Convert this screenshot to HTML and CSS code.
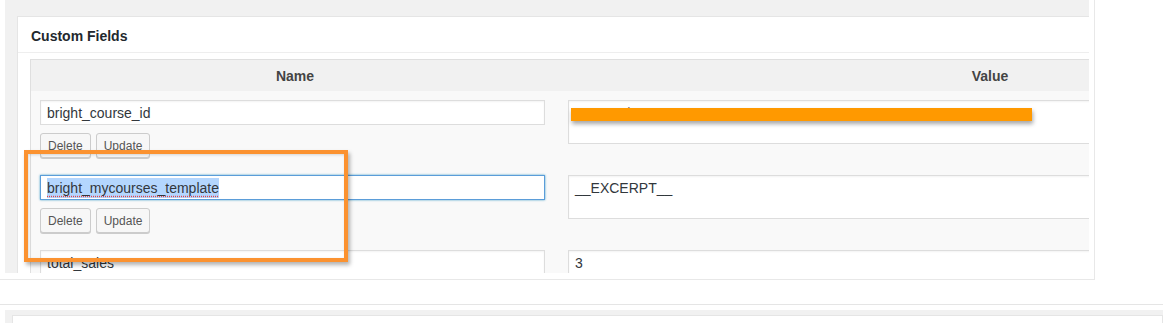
FILE: index.html
```html
<!DOCTYPE html>
<html lang="en">
<head>
    <meta charset="UTF-8">
    <title>Custom Fields</title>
    <link rel="stylesheet" href="styles.css">
</head>
<body>
    <div class="frame">
        <div class="wrap">
            <div class="postbox">
                <h2 class="postbox-title">Custom Fields</h2>
                <div class="inside">
                    <table class="meta-list">
                        <thead>
                            <tr>
                                <th class="col-name">Name</th>
                                <th class="col-value">Value</th>
                            </tr>
                        </thead>
                        <tbody>
                            <tr>
                                <td>
                                    <div class="field">bright_course_id</div>
                                    <div class="actions">
                                        <button class="btn">Delete</button>
                                        <button class="btn">Update</button>
                                    </div>
                                </td>
                                <td>
                                    <div class="area"><span class="hidden-value">B   ana  ha  nro  ee   a   vec  e  amn sa  r  Ena   x  ea   ro   a   mere  an</span></div>
                                </td>
                            </tr>
                            <tr>
                                <td>
                                    <div class="field is-focus"><span class="picked">bright_mycourses_template</span></div>
                                    <div class="actions">
                                        <button class="btn">Delete</button>
                                        <button class="btn">Update</button>
                                    </div>
                                </td>
                                <td>
                                    <div class="area">__EXCERPT__</div>
                                </td>
                            </tr>
                            <tr>
                                <td>
                                    <div class="field">total_sales</div>
                                </td>
                                <td>
                                    <div class="area">3</div>
                                </td>
                            </tr>
                        </tbody>
                    </table>
                </div>
            </div>
        </div>
    </div>

    <div class="lower">
        <div class="lower-bg">
            <div class="lower-box"></div>
        </div>
    </div>

    <!-- annotations on top of the screenshot -->
    <div class="redact"></div>
    <div class="highlight-box"></div>
</body>
</html>
```

FILE: styles.css
```css
/* base */
body {
    margin: 0;
    background: #fff;
    font-family: "Liberation Sans", Arial, sans-serif;
    color: #32373c;
    position: relative;
    height: 323px;
    overflow: hidden;
}

/* outer frame */
.frame {
    box-sizing: border-box;
    width: 1095px;
    height: 280px;
    padding: 0 5px 6px 5px;
    border-right: 1px solid #e8e8e8;
    border-bottom: 1px solid #e8e8e8;
}

.wrap {
    height: 273px;
    background: #f1f1f1;
    overflow: hidden;
    padding: 16px 0 0 12px;
    box-sizing: border-box;
}

/* postbox */
.postbox {
    width: 1500px;
    background: #fff;
    border: 1px solid #e5e5e5;
}

.postbox-title {
    margin: 0;
    height: 35px;
    line-height: 38px;
    padding: 0 13px;
    font-size: 14px;
    font-weight: bold;
    color: #23282d;
    border-bottom: 1px solid #eee;
}

.inside {
    padding: 6px 12px;
}

/* table */
.meta-list {
    table-layout: fixed;
    width: 1392px;
    border-collapse: collapse;
    border: 1px solid #dfdfdf;
    background: #f9f9f9;
}

.meta-list th {
    height: 31px;
    padding: 0;
    background: #f1f1f1;
    font-size: 14px;
    font-weight: bold;
    color: #444;
    text-align: center;
}

.col-name {
    width: 528px;
}

.meta-list td {
    vertical-align: top;
    padding: 9px 9px 8px 9px;
}

/* inputs */
.field,
.area {
    box-sizing: border-box;
    background: #fff;
    border: 1px solid #ddd;
    box-shadow: inset 0 1px 2px rgba(0, 0, 0, 0.05);
    font-size: 14px;
    color: #32373c;
    padding: 0 6px;
    white-space: nowrap;
    overflow: hidden;
}

.field {
    width: 505px;
    height: 25px;
    line-height: 24px;
}

.field.is-focus {
    border-color: #5b9dd9;
    box-shadow: 0 0 2px rgba(30, 140, 190, 0.8);
    line-height: 25px;
}

.picked {
    background: #b4d6fe;
    padding: 2px 0;
    text-decoration: underline dotted #e0464b;
    text-underline-offset: 3px;
}

.area {
    width: 900px;
    height: 44px;
    padding: 3px 6px;
    line-height: 18px;
}

.hidden-value {
    white-space: pre;
    color: #777;
}

/* buttons */
.actions {
    display: flex;
    gap: 5px;
    margin-top: 8px;
}

.btn {
    height: 25px;
    padding: 0 7px;
    font-family: "Liberation Sans", Arial, sans-serif;
    font-size: 12px;
    color: #555;
    background: #f7f7f7;
    border: 1px solid #ccc;
    border-radius: 3px;
    box-shadow: 0 1px 0 #ccc;
}

/* area below */
.lower {
    margin-top: 24px;
    width: 1163px;
    border-top: 1px solid #e5e5e5;
    padding-top: 5px;
}

.lower-bg {
    margin-left: 5px;
    height: 8px;
    background: #f1f1f1;
    padding: 5px 0 0 7px;
}

.lower-box {
    height: 7px;
    background: #fff;
    border: 1px solid #e5e5e5;
    border-bottom: 0;
}

/* annotations */
.redact {
    position: absolute;
    left: 571px;
    top: 108px;
    width: 461px;
    height: 13px;
    background: #ff9900;
    box-shadow: 1px 3px 4px rgba(0, 0, 0, 0.35);
}

.highlight-box {
    position: absolute;
    left: 24px;
    top: 150px;
    width: 324px;
    height: 112px;
    box-sizing: border-box;
    border: 4px solid #fb9230;
    box-shadow: 2px 3px 4px rgba(0, 0, 0, 0.3), inset 1px 1px 3px rgba(0, 0, 0, 0.15);
}
```
